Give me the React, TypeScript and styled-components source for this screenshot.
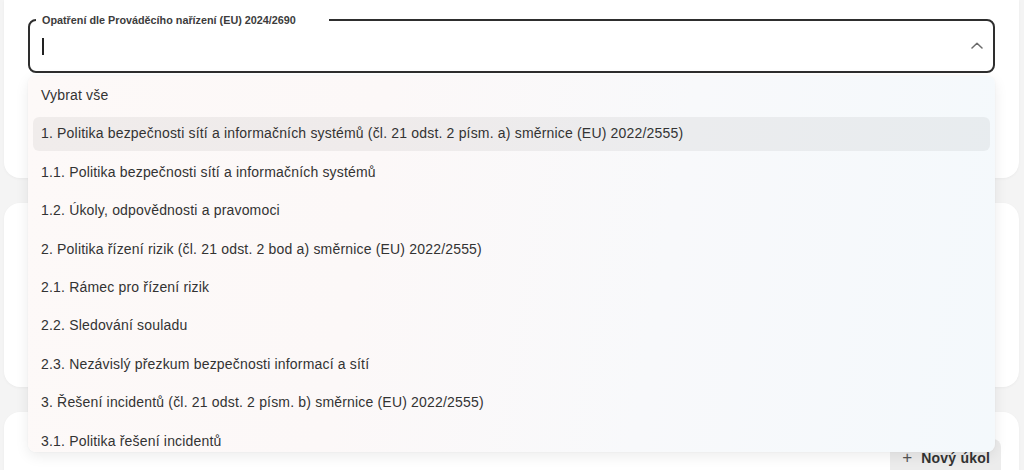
import React from "react";
import styled, { createGlobalStyle } from "styled-components";

const Global = createGlobalStyle`
  html, body { margin: 0; padding: 0; }
  body {
    background: #f4f4f4;
    font-family: "Liberation Sans", Arial, sans-serif;
    color: #333;
    overflow: hidden;
  }
`;

const Page = styled.div`
  display: flex;
  flex-direction: column;
  gap: 25px;
  padding: 0 5px 0 4px;
  height: 470px;
  overflow: hidden;
`;

const Card = styled.section<{ $h: number; $top?: boolean }>`
  position: relative;
  background: #ffffff;
  border-radius: ${(p) => (p.$top ? "0 0 16px 16px" : "16px")};
  box-shadow: 0 1px 3px rgba(0, 0, 0, 0.04);
  height: ${(p) => p.$h}px;
  flex-shrink: 0;
  box-sizing: border-box;
`;

const FieldArea = styled.div`
  padding: 14px 24px 0 24px;
`;

const FieldWrap = styled.div`
  position: relative;
`;

const Outline = styled.fieldset`
  margin: 0;
  height: 59px;
  box-sizing: border-box;
  border: 2px solid #2e2e2e;
  border-radius: 8px;
  padding: 0 10px 0 6px;
  display: flex;
  align-items: center;
`;

const Legend = styled.legend`
  width: 293px;
  box-sizing: border-box;
  padding: 0 6px;
  font-size: 10.8px;
  line-height: 12px;
  font-weight: 700;
  color: #3c3c3c;
  white-space: nowrap;
`;

const InputRow = styled.div`
  flex: 1;
  display: flex;
  align-items: center;
  justify-content: space-between;
  padding-left: 6px;
  margin-top: -5px;
`;

const Caret = styled.span`
  display: block;
  width: 2px;
  height: 17px;
  background: #222;
`;

const Chevron = styled.svg`
  width: 12px;
  height: 7px;
  margin-top: -1px;
`;

const Menu = styled.div`
  position: absolute;
  top: 62px;
  left: 0;
  right: 0;
  height: 376px;
  overflow: hidden;
  border-radius: 8px;
  background: linear-gradient(
    100deg,
    #fdf9f8 0%,
    #fcf8f8 35%,
    #f8f9fb 65%,
    #f4f9fc 100%
  );
  box-shadow: 0 4px 14px rgba(0, 0, 0, 0.08), 0 0 2px rgba(0, 0, 0, 0.05);
  padding: 3px 5px;
  box-sizing: border-box;
  display: flex;
  flex-direction: column;
  gap: 4.4px;
  z-index: 5;
`;

const Item = styled.div<{ $active?: boolean }>`
  flex-shrink: 0;
  height: 34px;
  box-sizing: border-box;
  display: flex;
  align-items: center;
  padding: 0 8px 2px;
  border-radius: 6px;
  font-size: 14px;
  letter-spacing: 0.18px;
  color: #333;
  white-space: nowrap;
  background: ${(p) => (p.$active ? "rgba(0, 0, 0, 0.05)" : "transparent")};
`;

const ButtonRow = styled.div`
  display: flex;
  justify-content: flex-end;
  padding: 27px 18px 0 0;
`;

const NewButton = styled.button`
  display: flex;
  align-items: center;
  gap: 9px;
  height: 38px;
  padding: 0 11px 0 12px;
  border: none;
  border-radius: 8px;
  background: #ececec;
  font-family: "Liberation Sans", Arial, sans-serif;
  font-size: 14px;
  font-weight: 700;
  letter-spacing: 0.2px;
  color: #333;
`;

const Plus = styled.span`
  font-weight: 400;
  font-size: 17px;
  color: #555;
`;

const items = [
  "Vybrat vše",
  "1. Politika bezpečnosti sítí a informačních systémů (čl. 21 odst. 2 písm. a) směrnice (EU) 2022/2555)",
  "1.1. Politika bezpečnosti sítí a informačních systémů",
  "1.2. Úkoly, odpovědnosti a pravomoci",
  "2. Politika řízení rizik (čl. 21 odst. 2 bod a) směrnice (EU) 2022/2555)",
  "2.1. Rámec pro řízení rizik",
  "2.2. Sledování souladu",
  "2.3. Nezávislý přezkum bezpečnosti informací a sítí",
  "3. Řešení incidentů (čl. 21 odst. 2 písm. b) směrnice (EU) 2022/2555)",
  "3.1. Politika řešení incidentů",
];

export default function App() {
  return (
    <>
      <Global />
      <Page>
        <Card $h={178} $top>
          <FieldArea>
            <FieldWrap>
              <Outline>
                <Legend>Opatření dle Prováděcího nařízení (EU) 2024/2690</Legend>
                <InputRow>
                  <Caret />
                  <Chevron viewBox="0 0 12 7">
                    <polyline
                      points="1,6 6,1.3 11,6"
                      fill="none"
                      stroke="#6b6b6b"
                      strokeWidth="1.5"
                      strokeLinecap="round"
                      strokeLinejoin="round"
                    />
                  </Chevron>
                </InputRow>
              </Outline>
              <Menu>
                {items.map((t, i) => (
                  <Item key={i} $active={i === 1}>
                    {t}
                  </Item>
                ))}
              </Menu>
            </FieldWrap>
          </FieldArea>
        </Card>
        <Card $h={184} />
        <Card $h={100}>
          <ButtonRow>
            <NewButton>
              <Plus>+</Plus>
              <span>Nový úkol</span>
            </NewButton>
          </ButtonRow>
        </Card>
      </Page>
    </>
  );
}
